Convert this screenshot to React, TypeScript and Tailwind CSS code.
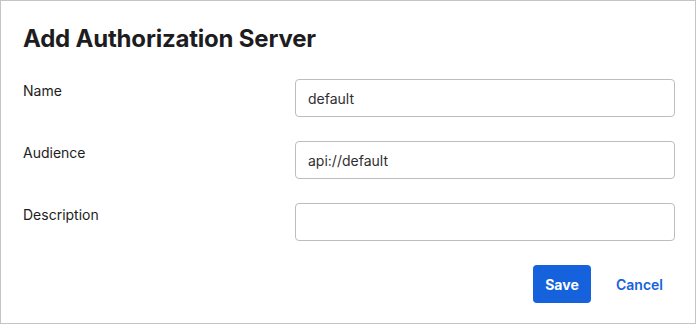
import React from "react";

const fields = [
  { label: "Name", value: "default" },
  { label: "Audience", value: "api://default" },
  { label: "Description", value: "" },
];

export default function App() {
  return (
    <div className="w-[698px] h-[326px] bg-white" style={{ fontFamily: "Inter, 'Noto Sans', sans-serif" }}>
      <div className="w-[696px] h-[324px] border border-[#c4c4c4] flex flex-col">
        <h1 className="pl-[22px] pt-[22px] text-[24px] leading-[32px] font-bold text-[#1d1d21] tracking-[-0.2px]">
          Add Authorization Server
        </h1>
        <div className="flex flex-col gap-[24px] mt-[24px] pl-[22px] pr-[20px]">
          {fields.map((f) => (
            <div key={f.label} className="flex">
              <label className="w-[272px] pt-[2px] text-[14px] leading-[20px] text-[#1d1d21]">{f.label}</label>
              <input
                readOnly
                value={f.value}
                className="w-[380px] h-[38px] rounded-[4px] border border-[#bdbdc0] px-[12px] text-[14px] text-[#2f2f33] outline-none"
              />
            </div>
          ))}
        </div>
        <div className="flex justify-end items-center gap-[25px] mt-[24px] pr-[32px]">
          <button className="h-[38px] w-[58px] rounded-[4px] bg-[#1662dd] text-white text-[14px] font-bold">Save</button>
          <button className="text-[14px] font-semibold text-[#1662dd]">Cancel</button>
        </div>
      </div>
    </div>
  );
}
